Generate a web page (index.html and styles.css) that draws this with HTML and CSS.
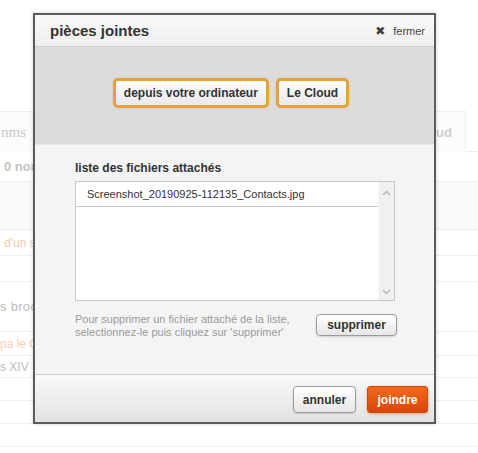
FILE: index.html
```html
<!DOCTYPE html>
<html lang="fr">
<head>
<meta charset="utf-8">
<title>pièces jointes</title>
<link rel="stylesheet" href="styles.css">
</head>
<body>
<div class="page">
  <div class="tabs">
    <div class="tab tab-left"><span class="tab-text">nms</span></div>
    <div class="tab-gap"></div>
    <div class="tab tab-right"><span class="tab-text-r">Le Cloud</span></div>
  </div>
  <div class="row r1"><span class="cell bold">0 noms</span></div>
  <div class="row r2 shaded"></div>
  <div class="row r3"><span class="cell orange">d'un s</span></div>
  <div class="row r4"></div>
  <div class="row r5"><span class="cell big">s broc</span></div>
  <div class="row r6"><span class="cell orange2">pa le G</span></div>
  <div class="row r7"><span class="cell grey">s XIV</span></div>
  <div class="row r8"></div>
  <div class="row r8"></div>
  <div class="row r8"></div>
</div>

<div class="dialog">
  <div class="dlg-head">
    <h1 class="dlg-title">pièces jointes</h1>
    <a class="dlg-close"><span class="close-x">✖</span>fermer</a>
  </div>
  <div class="dlg-source">
    <button class="src-btn">depuis votre ordinateur</button>
    <button class="src-btn">Le Cloud</button>
  </div>
  <div class="dlg-body">
    <div class="list-label">liste des fichiers attachés</div>
    <div class="listbox">
      <div class="list-items">
        <div class="list-item">Screenshot_20190925-112135_Contacts.jpg</div>
      </div>
      <div class="scrollbar">
        <svg class="arrow" width="9" height="6" viewBox="0 0 9 6"><path d="M1 5 L4.5 1.5 L8 5" fill="none" stroke="#b4b4b4" stroke-width="1.4"/></svg>
        <svg class="arrow" width="9" height="6" viewBox="0 0 9 6"><path d="M1 1 L4.5 4.5 L8 1" fill="none" stroke="#b4b4b4" stroke-width="1.4"/></svg>
      </div>
    </div>
    <div class="help-row">
      <p class="help">Pour supprimer un fichier attaché de la liste,<br>selectionnez-le puis cliquez sur 'supprimer'</p>
      <button class="btn btn-del">supprimer</button>
    </div>
  </div>
  <div class="dlg-foot">
    <button class="btn btn-cancel">annuler</button>
    <button class="btn btn-ok">joindre</button>
  </div>
</div>
</body>
</html>
```
FILE: styles.css
```css
* { box-sizing: border-box; }
html, body { margin: 0; padding: 0; }
body {
  width: 478px;
  height: 453px;
  overflow: hidden;
  background: #fff;
  font-family: "Liberation Sans", Arial, sans-serif;
  position: relative;
}

/* background page */
.page { padding-top: 111px; }
.tabs {
  display: flex;
  height: 41px;
  border-bottom: 1px solid #ededed;
}
.tab { height: 41px; }
.tab-left {
  width: 33px;
  border-top: 1px solid #ededed;
  white-space: nowrap;
  display: flex;
  align-items: center;
  padding-left: 1px;
  background: #fcfcfc;
}
.tab-text {
  font-family: "Liberation Serif", serif;
  font-size: 15px;
  color: #c9c9c9;
  display: block;
}
.tab-gap { flex: 1; }
.tab-right {
  width: 90px;
  margin-right: 12px;
  border: 1px solid #efefef;
  border-bottom: none;
  background: #fcfcfc;
  white-space: nowrap;
  display: flex;
  align-items: center;
  justify-content: flex-end;
  padding-right: 13px;
}
.tab-text-r {
  font-size: 13px;
  font-weight: bold;
  color: #cfcfcf;
  display: block;
}
.row {
  border-bottom: 1px solid #eeeeee;
  display: flex;
  align-items: center;
  white-space: nowrap;
}
.cell { display: block; }
.r1 { height: 30px; }
.r2 { height: 48px; }
.r3 { height: 26px; }
.r4 { height: 26px; }
.r5 { height: 50px; align-items: flex-start; padding-top: 17px; }
.r6 { height: 24px; }
.r7 { height: 22px; }
.r8 { height: 23px; }
.shaded { background: #f9f9f9; }
.bold { font-size: 13px; font-weight: bold; color: #c4c4c4; padding-left: 4px; }
.orange { font-size: 12px; color: #f2cbb0; padding-left: 4px; }
.big { font-size: 13px; color: #bdbdbd; padding-left: 0; letter-spacing: 0.3px; }
.orange2 { font-size: 12px; color: #f4d0b8; padding-left: 0; }
.grey { font-size: 12px; color: #bdbdbd; padding-left: 0; }

/* dialog */
.dialog {
  position: absolute;
  left: 33px;
  top: 13px;
  width: 403px;
  height: 411px;
  border: 2px solid #5c5c5c;
  background: #f4f4f4;
  box-shadow: 0 0 4px rgba(0, 0, 0, 0.18);
  display: flex;
  flex-direction: column;
}
.dlg-head {
  height: 32px;
  border-bottom: 1px solid #cfcfcf;
  background: linear-gradient(#fafafa, #eeeeee);
  display: flex;
  align-items: center;
  justify-content: space-between;
  padding: 0 9px 0 15px;
}
.dlg-title {
  margin: 0;
  font-size: 15px;
  font-weight: bold;
  color: #333;
  line-height: 18px;
}
.dlg-close {
  font-size: 11px;
  color: #444;
  display: flex;
  align-items: center;
  padding-top: 1px;
}
.close-x {
  font-family: "DejaVu Sans", sans-serif;
  font-size: 12px;
  line-height: 12px;
  color: #3c3c3c;
  margin-right: 8px;
}
.dlg-source {
  height: 98px;
  background: #dcdcdc;
  border-bottom: 1px solid #e8e8e8;
  display: flex;
  justify-content: center;
  align-items: flex-start;
  gap: 7px;
  padding-top: 31px;
  padding-right: 7px;
}
.src-btn {
  height: 30px;
  padding: 0 8px;
  border: 3px solid #e3a140;
  border-radius: 5px;
  background: linear-gradient(#fdfdfd, #e9e9e9);
  font-family: "Liberation Sans", Arial, sans-serif;
  font-size: 12px;
  font-weight: bold;
  color: #333;
  box-shadow: 0 0 2px rgba(227, 161, 64, 0.5);
}
.dlg-body {
  height: 229px;
  padding: 16px 37px 0 40px;
  background: #f4f4f4;
}
.list-label {
  font-size: 12px;
  font-weight: bold;
  color: #333;
  line-height: 14px;
  margin-bottom: 6px;
}
.listbox {
  height: 120px;
  margin-right: 2px;
  border: 1px solid #c8c8c8;
  background: #fff;
  display: flex;
}
.list-items { flex: 1; }
.list-item {
  height: 25px;
  border-bottom: 1px solid #c8c8c8;
  padding-left: 11px;
  font-size: 11px;
  color: #333;
  line-height: 25px;
}
.scrollbar {
  width: 16px;
  background: #f0f0f0;
  border-left: 1px solid #f6f6f6;
  display: flex;
  flex-direction: column;
  justify-content: space-between;
  align-items: center;
  padding: 8px 0 5px;
}
.arrow { display: block; }
.help-row {
  display: flex;
  justify-content: space-between;
  align-items: flex-start;
  margin-top: 12px;
}
.help {
  margin: 0;
  font-size: 11px;
  line-height: 13px;
  color: #9a9a9a;
}
.btn {
  font-family: "Liberation Sans", Arial, sans-serif;
  font-size: 12px;
  font-weight: bold;
  color: #333;
  border: 1px solid #9c9c9c;
  border-radius: 4px;
  background: linear-gradient(#ffffff, #e6e6e6);
  box-shadow: 0 1px 2px rgba(0, 0, 0, 0.15);
  padding: 0;
}
.btn-del {
  width: 81px;
  height: 22px;
  margin-top: 1px;
}
.dlg-foot {
  flex: 1;
  border-top: 1px solid #cdcdcd;
  background: linear-gradient(#f9f9f9, #e3e3e3);
  display: flex;
  justify-content: flex-end;
  align-items: flex-start;
  gap: 11px;
  padding: 11px 6px 0 0;
}
.btn-cancel {
  width: 63px;
  height: 27px;
}
.btn-ok {
  width: 61px;
  height: 27px;
  border: 1px solid #c9490a;
  border-radius: 3px;
  color: #fff;
  background: linear-gradient(#f3681b, #d8470a);
  box-shadow: 0 1px 3px rgba(200, 70, 10, 0.4);
}
```
